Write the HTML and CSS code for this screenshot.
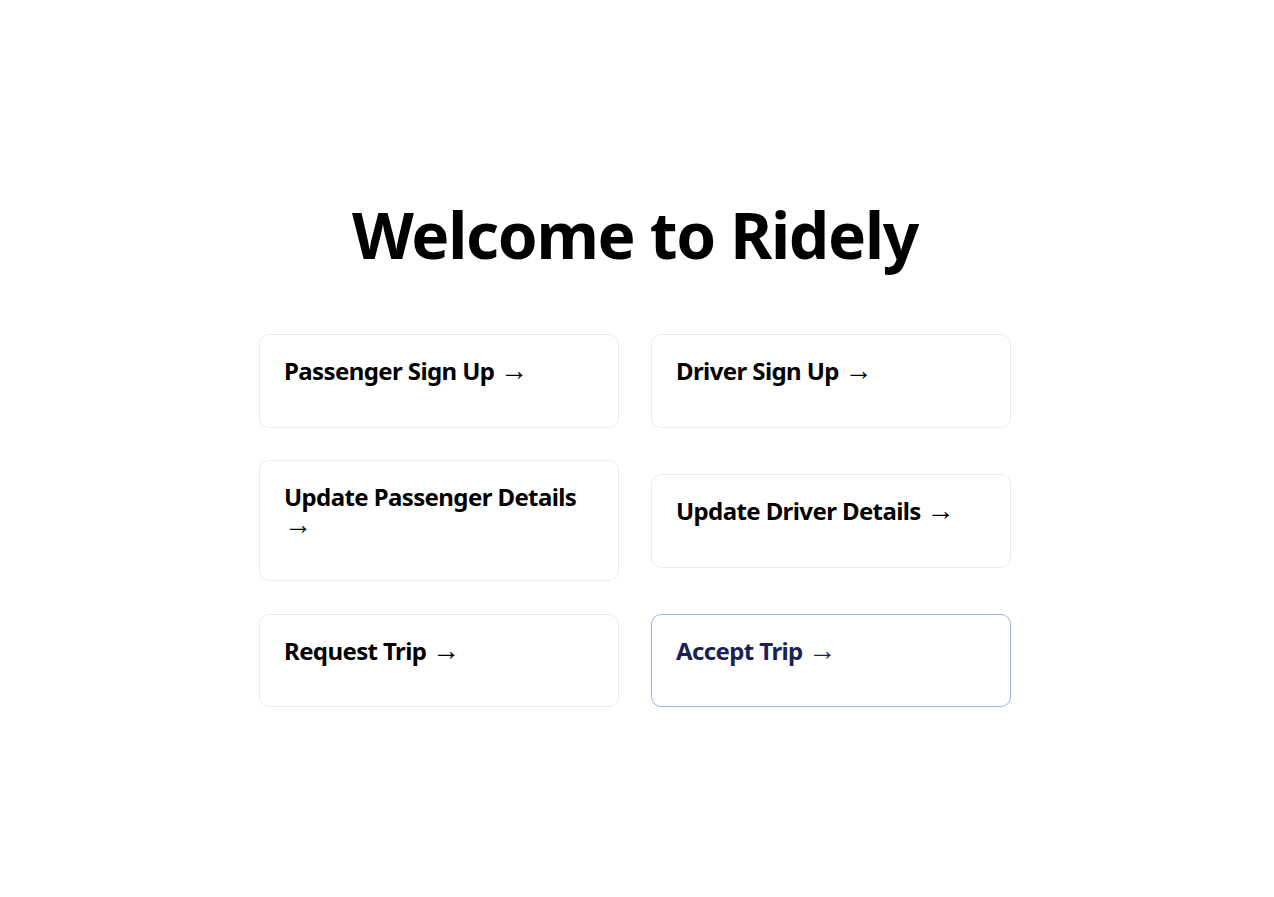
FILE: index.html
```html
<!DOCTYPE html>
<html lang="en">
<head>
<meta charset="utf-8">
<title>Ridely</title>
<link rel="stylesheet" href="styles.css">
</head>
<body>
<main class="main">
  <h1 class="title">Welcome to Ridely</h1>
  <div class="grid">
    <a class="card" href="#"><h2 class="card-title">Passenger Sign Up <span class="arrow">&rarr;</span></h2></a>
    <a class="card" href="#"><h2 class="card-title">Driver Sign Up <span class="arrow">&rarr;</span></h2></a>
    <a class="card" href="#"><h2 class="card-title">Update Passenger Details <span class="arrow">&rarr;</span></h2></a>
    <a class="card" href="#"><h2 class="card-title">Update Driver Details <span class="arrow">&rarr;</span></h2></a>
    <a class="card" href="#"><h2 class="card-title">Request Trip <span class="arrow">&rarr;</span></h2></a>
    <a class="card card-active" href="#"><h2 class="card-title">Accept Trip <span class="arrow">&rarr;</span></h2></a>
  </div>
</main>
</body>
</html>
```

FILE: styles.css
```css
html, body {
  margin: 0;
  padding: 0;
  background: #ffffff;
  font-family: "Noto Sans", "Open Sans", sans-serif;
  color: #000000;
}

.main {
  min-height: 100vh;
  box-sizing: border-box;
  padding-top: 8px;
  padding-right: 4px;
  display: flex;
  flex-direction: column;
  align-items: center;
  justify-content: center;
}

.title {
  margin: 0;
  font-size: 64px;
  line-height: 1.15;
  font-weight: 700;
  letter-spacing: -1.3px;
  text-align: center;
}

.grid {
  margin-top: 63px;
  display: grid;
  grid-template-columns: 360px 360px;
  column-gap: 32px;
  row-gap: 32.5px;
  align-items: center;
}

.card {
  display: block;
  box-sizing: border-box;
  padding: 22px 24px 26px;
  border: 1px solid #eaeaea;
  border-radius: 10px;
  text-decoration: none;
  color: inherit;
}

.card-title {
  margin: 0 0 16px 0;
  font-size: 24px;
  line-height: 1.15;
  font-weight: 700;
  letter-spacing: -0.6px;
}

.arrow {
  font-family: "Liberation Sans", sans-serif;
  font-size: 28px;
  line-height: 0;
  font-weight: 400;
  letter-spacing: 0;
}

.card-active {
  border-color: #9cb4ee;
  color: #1a2255;
}
```
